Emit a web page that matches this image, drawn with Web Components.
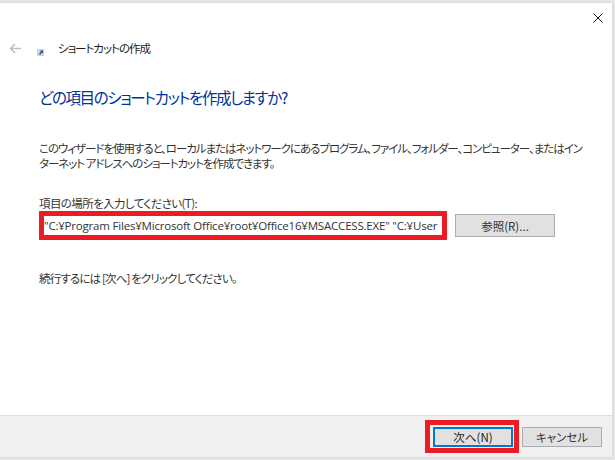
<!DOCTYPE html>
<html lang="ja">
<head>
<meta charset="utf-8">
<title>ショートカットの作成</title>
<style>
  html, body { margin: 0; height: 100%; background: #e6e6e6; }
  body { font-family: "Noto Sans CJK JP", sans-serif; font-feature-settings: "palt"; overflow: hidden; }
</style>
</head>
<body>
<wizard-window>
  <wizard-header slot="header" title-text="ショートカットの作成"></wizard-header>
  <wizard-page heading="どの項目のショートカットを作成しますか?">
    <p class="intro">このウィザードを使用すると、ローカルまたはネットワークにあるプログラム、ファイル、フォルダー、コンピューター、またはイン<br>ターネット アドレスへのショートカットを作成できます。</p>
    <path-field label="項目の場所を入力してください(T):" value="&quot;C:¥Program Files¥Microsoft Office¥root¥Office16¥MSACCESS.EXE&quot; &quot;C:¥User"></path-field>
    <p class="hint">続行するには [次へ] をクリックしてください。</p>
  </wizard-page>
  <wizard-footer slot="footer"></wizard-footer>
</wizard-window>

<script>
class WizardWindow extends HTMLElement {
  constructor() {
    super();
    this.attachShadow({ mode: "open" });
  }

  connectedCallback() {
    this.shadowRoot.innerHTML = `
      <style>
        :host {
          display: flex;
          flex-direction: column;
          box-sizing: border-box;
          width: 612px;
          height: 454px;
          margin-top: 3px;
          background: #fff;
          box-shadow: 0 0 2px #c8c8c8;
        }
        .close {
          display: flex;
          justify-content: flex-end;
          padding: 10px 9px 0 0;
          height: 10px;
        }
        svg { display: block; }
        main { flex: 1; display: flex; flex-direction: column; min-height: 0; }
      </style>
      <div class="close">
        <svg width="10" height="10" viewBox="0 0 10 10"><path d="M.5.5l9 9M9.500.5l-9 9" stroke="#1a1a1a" stroke-width="1" fill="none"/></svg>
      </div>
      <slot name="header"></slot>
      <main><slot></slot></main>
      <slot name="footer"></slot>
    `;
  }
}
customElements.define("wizard-window", WizardWindow);

class WizardHeader extends HTMLElement {
  constructor() {
    super();
    this.attachShadow({ mode: "open" });
  }

  connectedCallback() {
    const title = this.getAttribute("title-text") || "";
    this.shadowRoot.innerHTML = `
      <style>
        :host {
          display: flex;
          align-items: center;
          height: 20px;
          padding: 15px 0 0 9px;
          font-size: 11.5px;
          letter-spacing: -1px;
          color: #1a1a1a;
        }
        .back { margin-right: 16px; }
        .icon { margin: 9px 14px 0 0; }
        svg { display: block; }
      </style>
      <svg class="back" width="12" height="11" viewBox="0 0 12 11"><path d="M12 5.500H1.500M6 1L1.500 5.500 6 10" stroke="#c0c0c0" stroke-width="1.600" fill="none"/></svg>
      <svg class="icon" width="7" height="7" viewBox="0 0 7 7"><rect width="7" height="7" fill="#cdd3dc"/><path d="M2.500 6V4L4 2.500 3 1.500h3v3L5 3.500 3.500 5v1z" fill="#1f4f9c"/></svg>
      <span>${title}</span>
    `;
  }
}
customElements.define("wizard-header", WizardHeader);

class WizardPage extends HTMLElement {
  constructor() {
    super();
    this.attachShadow({ mode: "open" });
  }

  connectedCallback() {
    const heading = this.getAttribute("heading") || "";
    this.shadowRoot.innerHTML = `
      <style>
        :host {
          display: block;
          flex: 1;
          padding: 28px 0 0 39px;
          font-size: 11.5px;
          letter-spacing: -1.05px;
          color: #333;
        }
        h1 {
          margin: 0 0 33px;
          font-size: 15.5px;
          line-height: 22px;
          font-weight: 400;
          letter-spacing: -1.4px;
          color: #003399;
        }
        ::slotted(p) {
          margin: 0;
          line-height: 15px;
          white-space: nowrap;
        }
        ::slotted(.hint) { margin-top: 31px; letter-spacing: -.85px; }
      </style>
      <h1>${heading}</h1>
      <slot></slot>
    `;
  }
}
customElements.define("wizard-page", WizardPage);

class PathField extends HTMLElement {
  constructor() {
    super();
    this.attachShadow({ mode: "open" });
  }

  connectedCallback() {
    const label = this.getAttribute("label") || "";
    const value = this.getAttribute("value") || "";
    this.shadowRoot.innerHTML = `
      <style>
        :host { display: block; margin-top: 25px; }
        label { display: block; line-height: 15px; letter-spacing: -.6px; }
        .row { display: flex; align-items: center; gap: 8px; }
        .box {
          box-sizing: border-box;
          width: 408px;
          height: 29px;
          border: 5px solid #ed1c24;
          background: #fff;
          padding: 0;
          overflow: hidden;
          white-space: nowrap;
          font: 11.5px/19px "Open Sans", sans-serif;
          letter-spacing: -.2px;
          color: #333;
        }
      </style>
      <label>${label}</label>
      <div class="row">
        <div class="box">${value}</div>
        <wizard-button width="100" height="23">参照(R)...</wizard-button>
      </div>
    `;
  }
}
customElements.define("path-field", PathField);

class WizardButton extends HTMLElement {
  constructor() {
    super();
    this.attachShadow({ mode: "open" });
  }

  connectedCallback() {
    const w = this.getAttribute("width") || 80;
    const h = this.getAttribute("height") || 20;
    this.shadowRoot.innerHTML = `
      <style>
        :host {
          display: flex;
          align-items: center;
          justify-content: center;
          box-sizing: border-box;
          width: ${w}px;
          height: ${h}px;
          border: 1px solid #adadad;
          background: #e1e1e1;
          font-size: 11.5px;
          letter-spacing: 0;
          color: #333;
        }
        :host([primary]) { border: 2px solid #0078d7; color: #222; }
      </style>
      <slot></slot>
    `;
  }
}
customElements.define("wizard-button", WizardButton);

class WizardFooter extends HTMLElement {
  constructor() {
    super();
    this.attachShadow({ mode: "open" });
  }

  connectedCallback() {
    this.shadowRoot.innerHTML = `
      <style>
        :host {
          display: flex;
          align-items: center;
          justify-content: flex-end;
          gap: 3px;
          box-sizing: border-box;
          height: 42px;
          padding-right: 10px;
          background: #f0f0f0;
          border-top: 1px solid #dfdfdf;
        }
        .mark {
          display: flex;
          padding: 2px 1px 1px 3px;
          border: 5px solid #ed1c24;
        }
      </style>
      <div class="mark"><wizard-button primary width="80" height="20">次へ(N)</wizard-button></div>
      <wizard-button width="80" height="20">キャンセル</wizard-button>
    `;
  }
}
customElements.define("wizard-footer", WizardFooter);
</script>
</body>
</html>
